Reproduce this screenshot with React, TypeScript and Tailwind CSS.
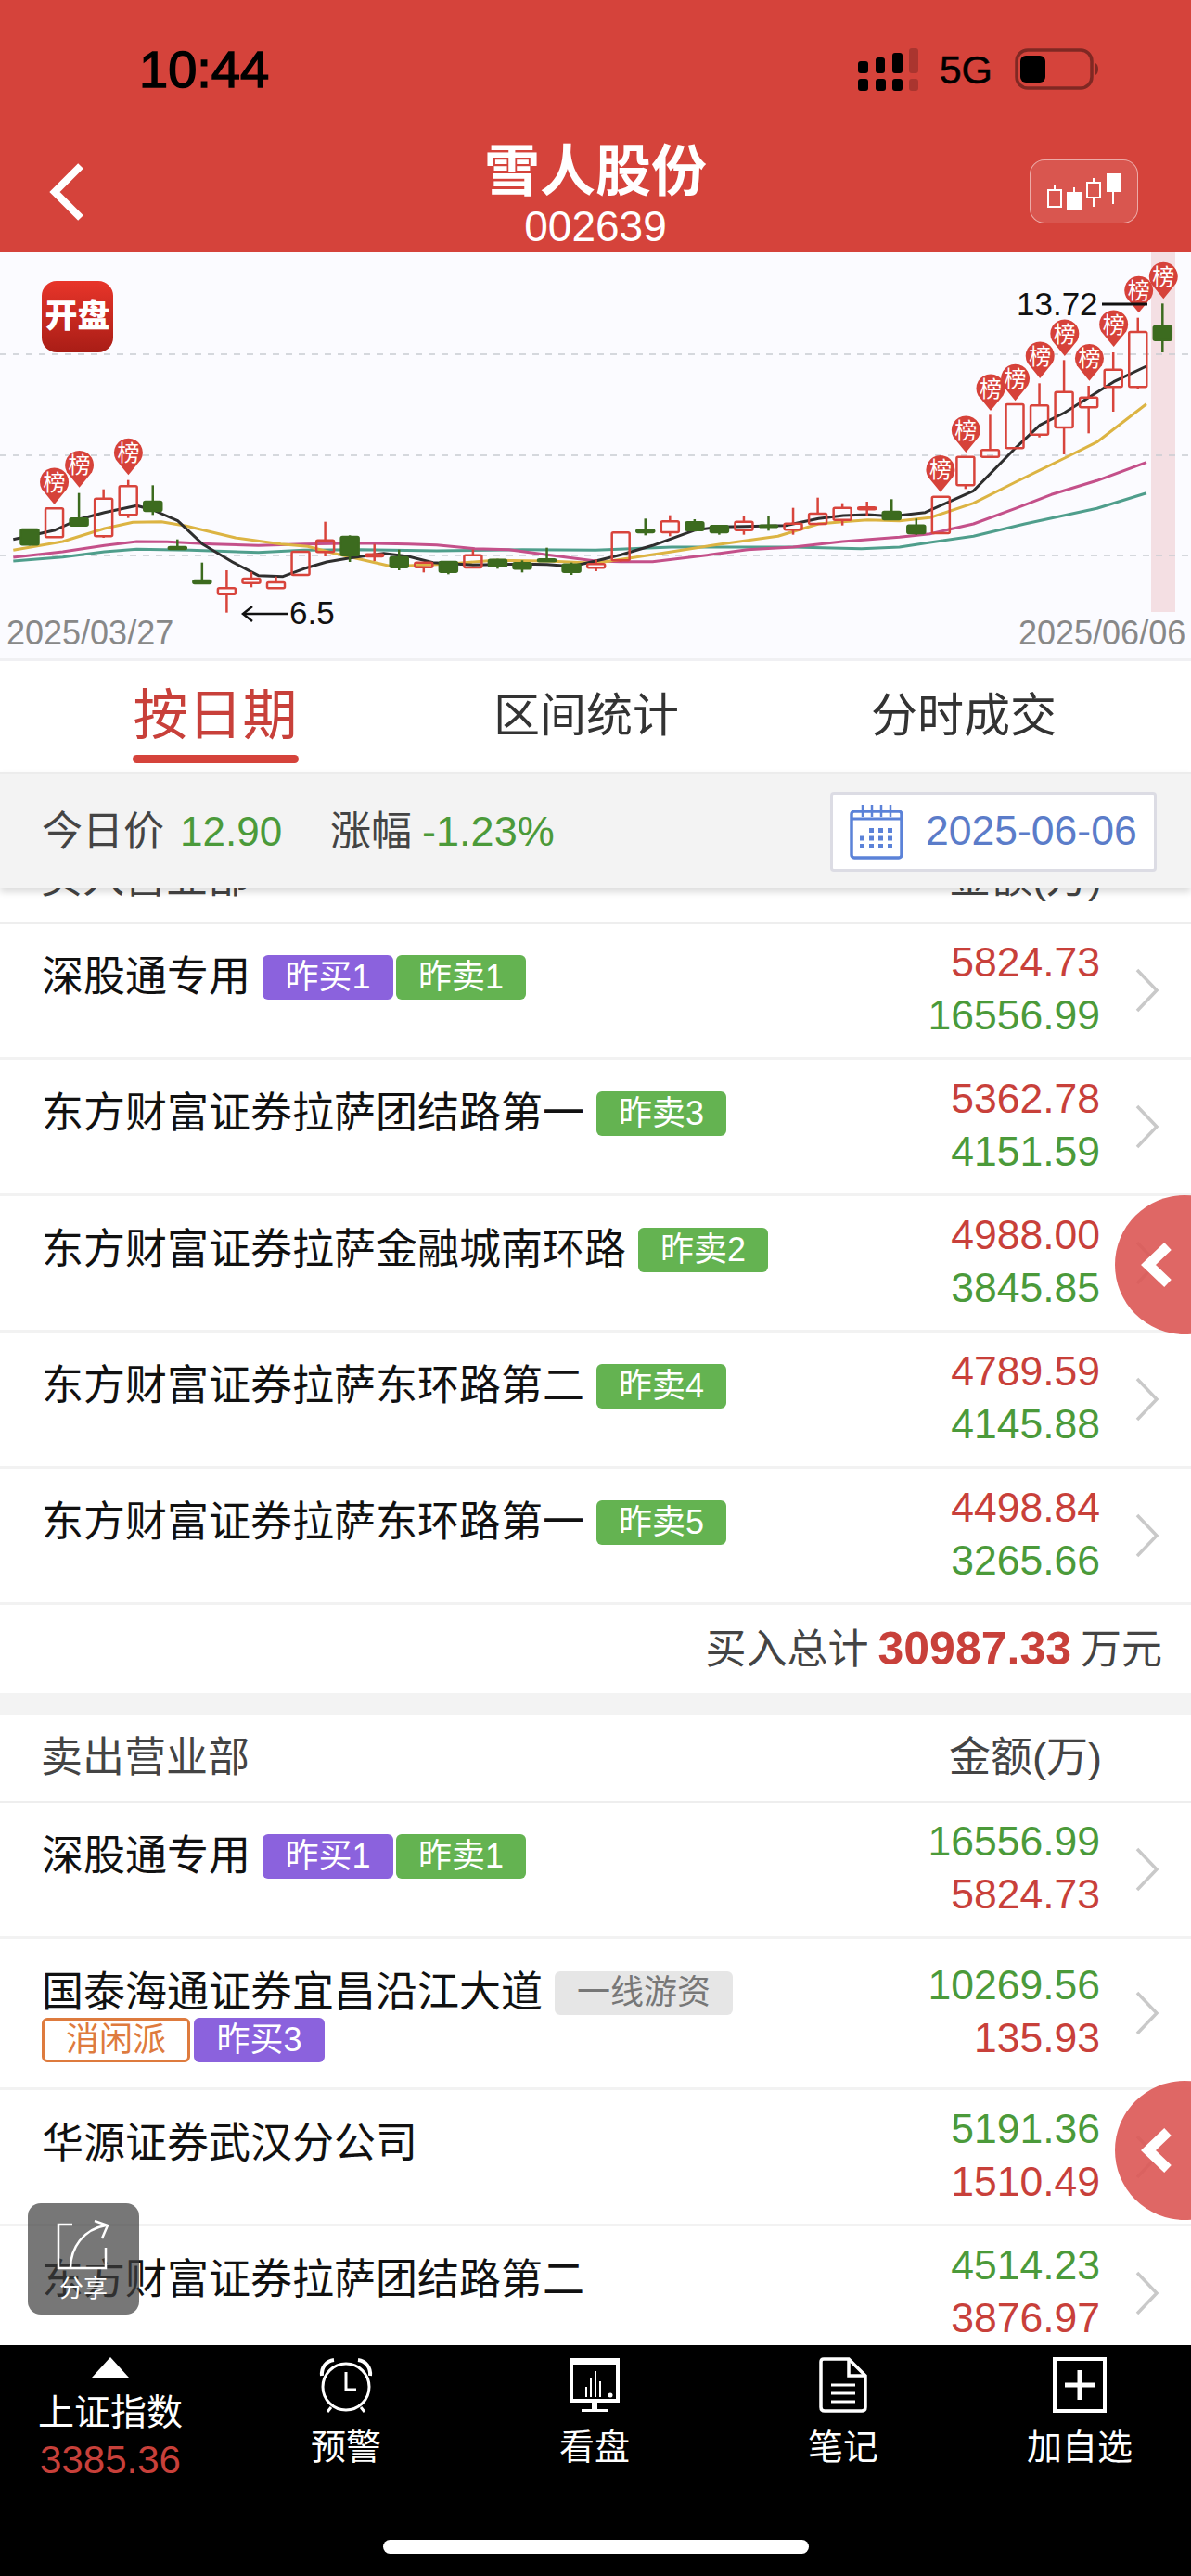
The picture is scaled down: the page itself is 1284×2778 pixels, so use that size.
import React from "react";

type Candle = [string, number, number, number, number];
type Row = { name: string; top: string; bottom: string; topColor: string; bottomColor: string; tags: { text: string; kind: string }[] };

const RED = "#c8403a";
const GREEN = "#4b9a3a";

// candle data: kind, wick top, body top, body bottom, wick bottom
const candles: Candle[] = [
  ["g", 900, 903, 952, 955], ["r", 835, 835, 928, 928], ["g", 785, 868, 890, 893], ["r", 773, 803, 925, 930],
  ["r", 743, 763, 856, 866], ["g", 760, 813, 843, 856], ["g", 935, 960, 966, 966], ["g", 1010, 1068, 1077, 1077],
  ["r", 1035, 1093, 1112, 1172], ["r", 1040, 1062, 1076, 1090], ["r", 1055, 1074, 1093, 1093], ["r", 975, 975, 1050, 1052],
  ["r", 878, 938, 976, 990], ["g", 922, 927, 986, 1008], ["r", 950, 983, 990, 1005], ["g", 968, 993, 1025, 1035],
  ["r", 1010, 1010, 1025, 1042], ["g", 1005, 1008, 1040, 1048], ["r", 968, 986, 1026, 1028], ["g", 998, 1001, 1022, 1030],
  ["g", 1003, 1012, 1030, 1042], ["g", 962, 1000, 1006, 1006], ["g", 1010, 1016, 1040, 1050], ["r", 1000, 1015, 1027, 1038],
  ["r", 913, 913, 1003, 1007], ["g", 868, 905, 912, 922], ["r", 857, 877, 912, 925], ["g", 870, 880, 905, 908],
  ["g", 888, 892, 912, 920], ["r", 860, 878, 905, 920], ["g", 860, 890, 895, 907], ["r", 833, 884, 904, 920],
  ["r", 800, 852, 885, 888], ["r", 818, 833, 872, 890], ["r", 813, 832, 838, 858], ["g", 805, 846, 870, 870],
  ["g", 868, 890, 915, 920], ["r", 795, 797, 915, 915], ["r", 668, 668, 760, 772], ["r", 532, 646, 668, 670],
  ["r", 498, 498, 640, 640], ["r", 430, 502, 596, 605], ["r", 355, 458, 573, 660], ["r", 438, 476, 508, 592],
  ["r", 330, 386, 442, 522], ["r", 218, 264, 442, 450], ["g", 172, 246, 290, 330],
];

const lineBlack = [35,935,145,905,208,870,275,848,360,826,403,840,468,875,533,950,615,1010,680,1052,745,1055,800,1030,860,1008,921,995,1010,980,1075,990,1140,1010,1246,1018,1375,1015,1440,1016,1505,1022,1568,1005,1635,985,1718,955,1830,905,1895,895,1960,893,2068,890,2155,868,2220,858,2284,855,2349,860,2436,848,2563,778,2673,640,2738,565,2803,525,2868,475,2932,425,3018,375];
const lineYellow = [35,970,165,942,275,900,350,880,425,878,490,892,620,930,740,950,810,958,880,980,950,1000,1030,1022,1180,1015,1300,1003,1440,1005,1568,1012,1635,1000,1768,975,1898,950,2048,925,2155,885,2218,878,2284,872,2368,875,2448,865,2563,818,2673,750,2803,672,2888,620,3018,497];
const linePink = [35,993,165,975,275,955,360,942,440,943,560,950,680,955,800,950,950,947,1075,950,1150,953,1250,965,1340,968,1440,985,1568,1005,1635,1007,1718,1007,1868,985,1968,968,2088,960,2218,942,2368,928,2448,917,2563,885,2673,835,2768,790,2888,745,3018,686];
const lineTeal = [35,1005,165,992,275,975,360,967,500,970,680,977,800,970,950,968,1150,972,1375,968,1568,970,1768,960,1968,960,2088,960,2268,965,2368,960,2448,945,2563,925,2698,885,2888,835,3018,785];

// pin head positions in the chart
const pins = [[143,750],[209,695],[338,655],[2476,710],[2543,582],[2608,447],[2673,415],[2738,342],[2803,270],[2868,350],[2932,240],[2998,130],[3063,85]];

const X = (p: number) => p / 2.442;
const Y = (p: number) => 270 + p / 3;
const toPoints = (a: number[]) => {
  const out: string[] = [];
  for (let i = 0; i < a.length; i += 2) out.push(`${X(a[i]).toFixed(1)},${Y(a[i + 1]).toFixed(1)}`);
  return out.join(" ");
};

const buyRows: Row[] = [
  { name: "深股通专用", top: "5824.73", bottom: "16556.99", topColor: RED, bottomColor: GREEN, tags: [{ text: "昨买1", kind: "buy" }, { text: "昨卖1", kind: "sell" }] },
  { name: "东方财富证券拉萨团结路第一", top: "5362.78", bottom: "4151.59", topColor: RED, bottomColor: GREEN, tags: [{ text: "昨卖3", kind: "sell" }] },
  { name: "东方财富证券拉萨金融城南环路", top: "4988.00", bottom: "3845.85", topColor: RED, bottomColor: GREEN, tags: [{ text: "昨卖2", kind: "sell" }] },
  { name: "东方财富证券拉萨东环路第二", top: "4789.59", bottom: "4145.88", topColor: RED, bottomColor: GREEN, tags: [{ text: "昨卖4", kind: "sell" }] },
  { name: "东方财富证券拉萨东环路第一", top: "4498.84", bottom: "3265.66", topColor: RED, bottomColor: GREEN, tags: [{ text: "昨卖5", kind: "sell" }] },
];

const sellRows: Row[] = [
  { name: "深股通专用", top: "16556.99", bottom: "5824.73", topColor: GREEN, bottomColor: RED, tags: [{ text: "昨买1", kind: "buy" }, { text: "昨卖1", kind: "sell" }] },
  { name: "国泰海通证券宜昌沿江大道", top: "10269.56", bottom: "135.93", topColor: GREEN, bottomColor: RED, tags: [{ text: "一线游资", kind: "gray" }, { text: "消闲派", kind: "orange" }, { text: "昨买3", kind: "buy" }] },
  { name: "华源证券武汉分公司", top: "5191.36", bottom: "1510.49", topColor: GREEN, bottomColor: RED, tags: [] },
  { name: "东方财富证券拉萨团结路第二", top: "4514.23", bottom: "3876.97", topColor: GREEN, bottomColor: RED, tags: [] },
];

function Tag({ text, kind }: { text: string; kind: string }) {
  if (kind === "gray")
    return <span className="flex h-[47px] w-[192px] items-center justify-center rounded-[6px] bg-[#e6e6e6] text-[36px] text-[#777]">{text}</span>;
  if (kind === "orange")
    return <span className="flex h-[48px] w-[160px] items-center justify-center rounded-[6px] border-[3px] border-[#de7b3e] text-[36px] text-[#de7b3e] mr-[1px]">{text}</span>;
  if (kind === "buy")
    return <span className="flex h-[48px] w-[141px] items-center justify-center rounded-[6px] bg-[#8b62dd] text-[36px] text-white">{text}</span>;
  return <span className="flex h-[48px] w-[140px] items-center justify-center rounded-[6px] bg-[#64b351] text-[36px] text-white">{text}</span>;
}

function ListRow({ row }: { row: Row }) {
  return (
    <div className="flex min-h-[147px] shrink-0 items-center border-b-[3px] border-[#f2f2f2] bg-white pl-[45px] pr-[34px]">
      <div className="flex w-[800px] flex-wrap items-center gap-x-[3px] gap-y-[3px] self-start pt-[34px] pb-[27px]">
        <span className="mr-[10px] h-[48px] text-[45px] leading-[48px] text-[#111]">{row.name}</span>
        {row.tags.map((t) => (
          <Tag key={t.text} text={t.text} kind={t.kind} />
        ))}
      </div>
      <div className="ml-auto mb-[4px] text-right text-[44.5px] leading-[57px]">
        <div style={{ color: row.topColor }}>{row.top}</div>
        <div style={{ color: row.bottomColor }}>{row.bottom}</div>
      </div>
      <svg width="26" height="48" viewBox="0 0 26 48" className="ml-[38px]">
        <polyline points="2,2 23,24 2,46" fill="none" stroke="#c9c9c9" strokeWidth="3.5" />
      </svg>
    </div>
  );
}

function SectionHead({ title }: { title: string }) {
  return (
    <div className="flex h-[94px] shrink-0 items-center justify-between border-b-[2px] border-[#eeeeee] bg-white pl-[44px] pr-[96px] text-[45px] text-[#444]">
      <span>{title}</span>
      <span>金额(万)</span>
    </div>
  );
}

function Chart() {
  return (
    <div className="relative h-[438px] shrink-0 bg-[#fbfbff]">
      <svg width="1284" height="438" viewBox="0 272 1284 438" className="block">
        <rect x="1241" y="272" width="26" height="388" fill="#f4dfe3" />
        {[382, 491, 599].map((y) => (
          <line key={y} x1="0" x2="1284" y1={y} y2={y} stroke="#c9cdd2" strokeWidth="1.5" strokeDasharray="7 7" />
        ))}
        <polyline points={toPoints(lineTeal)} fill="none" stroke="#4f9e8c" strokeWidth="3" strokeLinejoin="round" />
        <polyline points={toPoints(linePink)} fill="none" stroke="#c4508a" strokeWidth="3" strokeLinejoin="round" />
        <polyline points={toPoints(lineYellow)} fill="none" stroke="#dcb443" strokeWidth="3" strokeLinejoin="round" />
        <polyline points={toPoints(lineBlack)} fill="none" stroke="#2e2e2e" strokeWidth="3" strokeLinejoin="round" />
        {candles.map((c, i) => {
          const cx = 32 + i * 26.55;
          const red = c[0] === "r";
          const color = red ? "#d8443c" : "#3c6b1f";
          return (
            <g key={i}>
              <line x1={cx} x2={cx} y1={Y(c[1])} y2={Y(c[2])} stroke={color} strokeWidth="2.5" />
              <line x1={cx} x2={cx} y1={Y(c[3])} y2={Y(c[4])} stroke={color} strokeWidth="2.5" />
              <rect
                x={cx - 9.5}
                y={Y(c[2])}
                width="19"
                height={Y(c[3]) - Y(c[2])}
                rx="1.5"
                fill={red ? "none" : color}
                stroke={color}
                strokeWidth="2.5"
              />
            </g>
          );
        })}
        {pins.map(([px, py]) => {
          const cx = X(px);
          const cy = Y(py);
          return (
            <g key={px}>
              <path d={`M${cx} ${cy + 24} L${cx - 13.5} ${cy + 7.5} A15.5 15.5 0 1 1 ${cx + 13.5} ${cy + 7.5} Z`} fill="#d6423a" />
              <text x={cx} y={cy + 8.5} textAnchor="middle" fontSize="24" fill="#fff">榜</text>
            </g>
          );
        })}
        <text x="1096" y="340" fontSize="35" fill="#111">13.72</text>
        <line x1="1188" x2="1237" y1="328" y2="328" stroke="#111" strokeWidth="3" />
        <text x="312" y="673" fontSize="35" fill="#111">6.5</text>
        <line x1="263" x2="310" y1="662" y2="662" stroke="#111" strokeWidth="2.5" />
        <polyline points="272,654 262,662 272,670" fill="none" stroke="#111" strokeWidth="2.5" />
        <text x="7" y="695" fontSize="36" fill="#888">2025/03/27</text>
        <text x="1098" y="695" fontSize="36" fill="#888">2025/06/06</text>
      </svg>
      <div className="absolute left-[45px] top-[31px] flex h-[77px] w-[77px] items-center justify-center rounded-[16px] bg-gradient-to-b from-[#e8352a] to-[#a91d16] text-[35px] font-black text-white">
        开盘
      </div>
    </div>
  );
}

function CalendarIcon() {
  const dots: React.ReactElement[] = [];
  for (let r = 0; r < 3; r++)
    for (let c = 0; c < 4; c++) {
      if (r === 0 && c === 0) continue;
      dots.push(<rect key={`${r}${c}`} x={11 + c * 10} y={26 + r * 8.5} width="5" height="5" fill="#5b82d8" />);
    }
  return (
    <svg width="58" height="60" viewBox="0 0 58 60">
      <rect x="2" y="8" width="54" height="50" rx="3" fill="none" stroke="#5b82d8" strokeWidth="3.5" />
      <line x1="2" x2="56" y1="16" y2="16" stroke="#5b82d8" strokeWidth="3" />
      {[14, 24, 34, 44].map((x) => (
        <line key={x} x1={x} x2={x} y1="1" y2="14" stroke="#5b82d8" strokeWidth="2.5" />
      ))}
      {dots}
    </svg>
  );
}

function FloatButton({ top }: { top: string }) {
  return (
    <div className={`absolute left-[1202px] ${top} flex h-[150px] w-[150px] items-center rounded-full bg-[#db5654]/90 pl-[28px]`}>
      <svg width="34" height="50" viewBox="0 0 34 50">
        <polyline points="29,5 8,25 29,45" fill="none" stroke="#fff" strokeWidth="11" />
      </svg>
    </div>
  );
}

function NavItem({ label, width, children }: { label: string; width: string; children: React.ReactNode }) {
  return (
    <div className={`flex ${width} flex-col items-center`}>
      <div className="flex h-[60px] items-center justify-center">{children}</div>
      <span className="mt-[13px] text-[38px] leading-[48px] text-white">{label}</span>
    </div>
  );
}

export default function App() {
  return (
    <div className="relative flex h-[2778px] w-[1284px] flex-col overflow-hidden bg-white [font-family:'Liberation_Sans','Noto_Sans_CJK_SC',sans-serif]">
      {/* header */}
      <div className="h-[272px] shrink-0 bg-[#d5433b]">
        <div className="flex h-[150px] items-center pl-[150px] pr-[98px] text-black">
          <span className="text-[56px] [-webkit-text-stroke:1.5px_black]">10:44</span>
          <svg width="66" height="46" viewBox="0 0 66 46" className="ml-auto">
            <rect x="0" y="14" width="11" height="13" rx="3" fill="#000" />
            <rect x="19" y="10" width="10" height="17" rx="3" fill="#000" />
            <rect x="37" y="5" width="11" height="22" rx="3" fill="#000" />
            <rect x="55" y="0" width="10" height="27" rx="3" fill="#000" fillOpacity="0.2" />
            {[0, 19, 37].map((x) => (
              <rect key={x} x={x} y="33" width="11" height="13" rx="3" fill="#000" />
            ))}
            <rect x="55" y="33" width="10" height="13" rx="3" fill="#000" fillOpacity="0.2" />
          </svg>
          <span className="ml-[22px] text-[43px] [-webkit-text-stroke:0.5px_black]">5G</span>
          <svg width="92" height="46" viewBox="0 0 92 46" className="ml-[24px]">
            <rect x="2" y="2" width="81" height="41" rx="12" fill="none" stroke="#000" strokeOpacity="0.4" strokeWidth="3.5" />
            <rect x="6" y="8" width="27" height="29" rx="6" fill="#000" />
            <path d="M87 16 C91 18 91 27 87 29 Z" fill="#000" fillOpacity="0.4" />
          </svg>
        </div>
        <div className="flex h-[122px] text-white">
          <div className="flex w-[200px] items-start pl-[50px] pt-[25px]">
            <svg width="44" height="64" viewBox="0 0 44 64">
              <polyline points="37,4 9,32 37,60" fill="none" stroke="#fff" strokeWidth="8" />
            </svg>
          </div>
          <div className="flex-1 text-center">
            <div className="text-[60px] font-bold leading-[72px]">雪人股份</div>
            <div className="text-[46px] leading-[44px]">002639</div>
          </div>
          <div className="flex w-[200px] items-start justify-end pr-[57px] pt-[22px]">
            <div className="flex h-[69px] w-[117px] items-center justify-center rounded-[16px] border-[1.5px] border-white/50 bg-white/10">
              <svg width="82" height="44" viewBox="0 0 82 44">
                <g fill="none" stroke="#fff" strokeWidth="2">
                  <rect x="2" y="20" width="14" height="18" />
                  <line x1="9" x2="9" y1="15" y2="20" />
                  <line x1="30" x2="30" y1="17" y2="22" />
                  <rect x="44" y="12" width="14" height="16" />
                  <line x1="51" x2="51" y1="7" y2="12" />
                  <line x1="51" x2="51" y1="28" y2="38" />
                  <line x1="72" x2="72" y1="20" y2="35" />
                </g>
                <rect x="22" y="22" width="16" height="19" fill="#fff" />
                <rect x="65" y="2" width="15" height="20" fill="#fff" />
              </svg>
            </div>
          </div>
        </div>
      </div>

      <Chart />

      {/* tabs */}
      <div className="flex h-[122px] shrink-0 border-t-[3px] border-[#f0f0f3] bg-white text-[50px] text-[#333]">
        <div className="flex w-[464px] flex-col items-center">
          <span className="mt-[24px] text-[59px] leading-[70px] text-[#c8403a]">按日期</span>
          <span className="mt-[7px] h-[9px] w-[179px] rounded-[5px] bg-[#d5433b]" />
        </div>
        <div className="flex w-[336px] justify-center pt-[29px] leading-[60px]">区间统计</div>
        <div className="flex w-[478px] justify-center pt-[29px] leading-[60px]">分时成交</div>
      </div>

      {/* price bar */}
      <div className="relative z-10 flex h-[126px] shrink-0 items-center border-t-[3px] border-[#ececec] bg-[#f3f3f3] pl-[45px] pr-[37px] text-[44px] text-[#444] shadow-[0_4px_7px_rgba(0,0,0,0.14)]">
        <span>今日价</span>
        <span className="ml-[17px] text-[#4b9a3a]">12.90</span>
        <span className="ml-[52px]">涨幅</span>
        <span className="ml-[11px] text-[45px] text-[#4b9a3a]">-1.23%</span>
        <div className="ml-auto flex h-[86px] w-[352px] items-center rounded-[4px] border-[3px] border-[#dcdce4] bg-white pl-[18px]">
          <CalendarIcon />
          <span className="ml-[24px] text-[44.5px] text-[#5b7cc9]">2025-06-06</span>
        </div>
      </div>

      {/* list */}
      <div className="flex min-h-0 flex-1 flex-col overflow-hidden">
        <div className="-mt-[56px]">
          <SectionHead title="买入营业部" />
        </div>
        {buyRows.map((r) => (
          <ListRow key={r.name} row={r} />
        ))}
        <div className="flex h-[95px] shrink-0 items-center justify-end pr-[31px] text-[44px] text-[#444]">
          <span>买入总计</span>
          <span className="mx-[10px] text-[50px] font-bold text-[#c8403a]">30987.33</span>
          <span>万元</span>
        </div>
        <div className="h-[24px] shrink-0 bg-[#f3f3f3]" />
        <SectionHead title="卖出营业部" />
        {sellRows.map((r) => (
          <ListRow key={r.name} row={r} />
        ))}
      </div>

      {/* bottom nav */}
      <div className="flex h-[249px] shrink-0 flex-col bg-black pt-[13px]">
        <div className="flex h-[197px]">
          <div className="flex w-[238px] flex-col items-center">
            <div className="h-0 w-0 border-x-[20px] border-b-[22px] border-x-transparent border-b-white" />
            <span className="mt-[14px] text-[39px] leading-[48px] text-white">上证指数</span>
            <span className="mt-[2px] text-[42px] leading-[50px] text-[#c8403a]">3385.36</span>
          </div>
          <NavItem label="预警" width="w-[270px]">
            <svg width="58" height="60" viewBox="0 0 58 60" fill="none" stroke="#fff" strokeWidth="3">
              <circle cx="29" cy="32" r="25" />
              <polyline points="29,16 29,35 40,35" />
              <path d="M3 20 C2 11 8 4 16 3" strokeWidth="4" />
              <path d="M55 20 C56 11 50 4 42 3" strokeWidth="4" />
              <path d="M13 54 L9 59 M45 54 L49 59" />
            </svg>
          </NavItem>
          <NavItem label="看盘" width="w-[266px]">
            <svg width="56" height="60" viewBox="0 0 56 60">
              <path d="M1 1 H55 V49 H1 Z M5 8 V45 H51 V8 Z" fill="#fff" fillRule="evenodd" />
              <rect x="18" y="32" width="2" height="11" fill="#fff" />
              <rect x="23" y="22" width="2" height="21" fill="#fff" />
              <rect x="28" y="15" width="2" height="28" fill="#fff" />
              <rect x="33" y="26" width="2" height="17" fill="#fff" />
              <circle cx="45" cy="41" r="2.5" fill="#fff" />
              <rect x="25" y="49" width="6" height="7" fill="#fff" />
              <rect x="14" y="56" width="28" height="3" fill="#fff" />
            </svg>
          </NavItem>
          <NavItem label="笔记" width="w-[270px]">
            <svg width="52" height="60" viewBox="0 0 52 60" fill="none" stroke="#fff" strokeWidth="3.5">
              <path d="M5 2 H32 L50 20 V54 Q50 58 46 58 H6 Q2 58 2 54 V5 Q2 2 5 2 Z" />
              <path d="M32 2 V20 H50" />
              <path d="M13 30 H39 M13 39 H39 M13 48 H39" strokeWidth="3" />
            </svg>
          </NavItem>
          <NavItem label="加自选" width="w-[240px]">
            <svg width="58" height="60" viewBox="0 0 58 60">
              <rect x="2" y="2" width="54" height="56" fill="none" stroke="#fff" strokeWidth="4" />
              <rect x="26.5" y="14" width="5" height="32" fill="#fff" />
              <rect x="13" y="27.5" width="32" height="5" fill="#fff" />
            </svg>
          </NavItem>
        </div>
        <div className="mx-auto h-[15px] w-[459px] rounded-full bg-white" />
      </div>

      {/* floating */}
      <FloatButton top="top-[1289px]" />
      <FloatButton top="top-[2244px]" />
      <div className="absolute left-[30px] top-[2376px] flex h-[120px] w-[120px] flex-col items-center rounded-[14px] bg-[#3d3d3d]/70 pt-[18px] text-white">
        <svg width="60" height="54" viewBox="0 0 60 54" fill="none" stroke="#fff" strokeWidth="2.5">
          <path d="M18 5 H3 V52 H54 V30" />
          <path d="M16 52 C16 30 30 10 54 6" />
          <polyline points="42,1 56,6 50,20" />
        </svg>
        <span className="mt-[5px] text-[26px] leading-[30px]">分享</span>
      </div>
    </div>
  );
}
